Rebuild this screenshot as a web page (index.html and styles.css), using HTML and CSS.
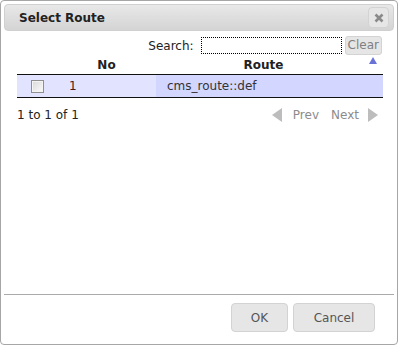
FILE: index.html
```html
<!DOCTYPE html>
<html>
<head>
<meta charset="utf-8">
<link rel="stylesheet" href="styles.css">
</head>
<body>
<div class="dialog">
  <div class="titlebar">
    <span class="title">Select Route</span>
    <span class="close"><svg width="10" height="10" viewBox="0 0 10 10"><path d="M1.5 1.5 L8.5 8.5 M8.5 1.5 L1.5 8.5" stroke="#8a8a8a" stroke-width="2.6"/></svg></span>
  </div>
  <div class="content">
    <div class="search">
      <label>Search:</label>
      <span class="input"></span>
      <span class="clear">Clear</span>
    </div>
    <table class="grid">
      <colgroup><col class="w-chk"><col class="w-no"><col></colgroup>
      <thead>
        <tr><th></th><th>No</th><th class="hroute">Route<span class="sort"></span></th></tr>
      </thead>
      <tbody>
        <tr><td class="chk"><span class="cb"></span></td><td class="num">1</td><td class="sorted">cms_route::def</td></tr>
      </tbody>
    </table>
    <div class="info">
      <span>1 to 1 of 1</span>
      <span class="pager"><span class="tri left"></span><span class="pg">Prev</span><span class="pg">Next</span><span class="tri right"></span></span>
    </div>
  </div>
  <div class="buttons">
    <span class="btn ok">OK</span>
    <span class="btn cancel">Cancel</span>
  </div>
</div>
</body>
</html>
```
FILE: styles.css
```css
html, body { margin: 0; padding: 0; background: #fff; }
body { font-family: "DejaVu Sans", Verdana, sans-serif; font-size: 12px; color: #222; }
.dialog {
  width: 396px; height: 343px;
  border: 1px solid #a6a6a6; border-radius: 4px;
  display: flex; flex-direction: column;
}
.titlebar {
  margin: 3px 3px 0 3px;
  height: 25px;
  border: 1px solid #d0d0d0; border-radius: 4px;
  background: linear-gradient(#e8e8e8, #d4d4d4);
  display: flex; align-items: center; justify-content: space-between;
  padding: 0 4px 0 14px;
}
.title { font-weight: bold; font-size: 12px; color: #222; }
.close {
  width: 19px; height: 19px; border: 1px solid #d3d3d3; border-radius: 4px;
  background: #e6e6e6; display: flex; align-items: center; justify-content: center;
}
.content { flex: 1; padding: 0 15px 0 16px; }
.search { display: flex; justify-content: flex-end; align-items: center; margin-top: 5px; height: 19px; }
.search label { color: #222; margin-right: 7px; }
.input { width: 139px; height: 15px; border: 1px dotted #000; margin-right: 3px; background: #fff; }
.clear {
  border: 1px solid #d3d3d3; border-radius: 3px; background: #e6e6e6;
  color: #808080; padding: 1px 2px; height: 15px; line-height: 15px;
}
.grid { width: 366px; border-collapse: collapse; table-layout: fixed; }
.w-chk { width: 40px; }
.w-no { width: 99px; }
.grid th { font-weight: bold; height: 19px; padding: 0; border-bottom: 1px solid #111; color: #222; }
.hroute { position: relative; padding-right: 12px !important; }
.sort {
  position: absolute; right: 6px; top: 2px;
  width: 0; height: 0; border-left: 4px solid transparent; border-right: 4px solid transparent;
  border-bottom: 7px solid #6a72d8;
}
.grid td { height: 22px; padding: 0; background: #e2e4ff; border-bottom: 1px solid #111; }
.grid td.chk { padding-left: 14px; }
.grid td.num { padding-left: 12px; color: #4a1a1a; }
.grid td.sorted { background: #d3d6ff; padding-left: 11px; color: #333; }
.cb {
  display: block; width: 11px; height: 11px; border: 1px solid #8f8f8f;
  background: linear-gradient(135deg, #d8d8d8, #fbfbfb);
  box-shadow: inset 0 0 0 1px #f4f4f4;
}
.info { display: flex; justify-content: space-between; align-items: center; margin-top: 10px; }
.pager { display: flex; align-items: center; color: #8c8c8c; margin-right: 4px; }
.pg { margin: 0 6px; }
.tri { width: 0; height: 0; border-top: 7px solid transparent; border-bottom: 7px solid transparent; }
.tri.left { border-right: 10px solid #bdbdbd; margin-right: 5px; }
.tri.right { border-left: 10px solid #bdbdbd; margin-left: 3px; }
.buttons {
  margin: 0 3px 12px 3px; border-top: 1px solid #aaa;
  display: flex; justify-content: flex-end; padding: 8px 19px 0 0; gap: 5px;
}
.btn {
  height: 27px; border: 1px solid #d3d3d3; border-radius: 4px; background: #e6e6e6;
  color: #555; display: flex; align-items: center; justify-content: center;
  font-size: 12px;
}
.ok { width: 55px; }
.cancel { width: 80px; }
```
